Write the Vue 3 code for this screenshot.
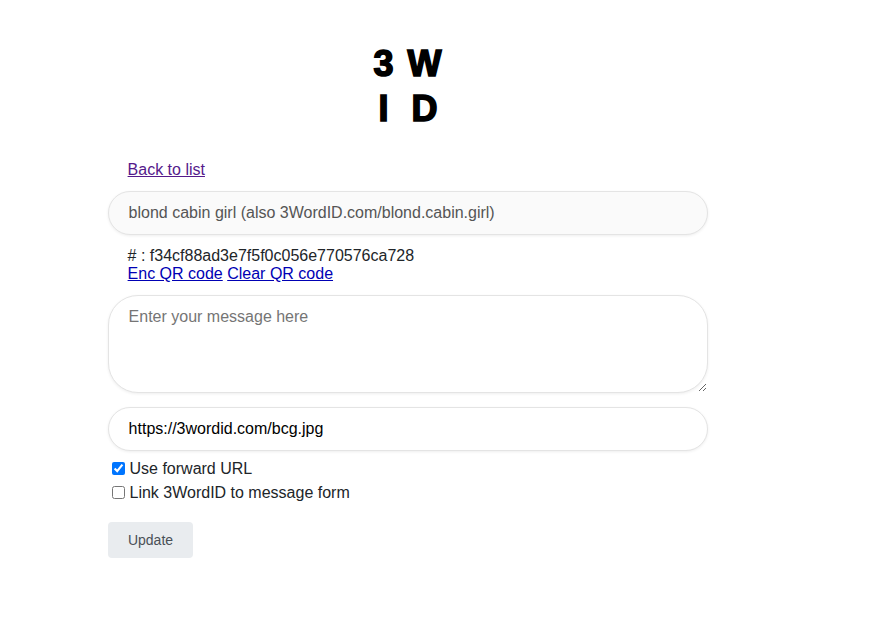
<template>
  <div class="page">
    <div class="logo">
      <div class="logo-row"><span>3</span><span>W</span></div>
      <div class="logo-row"><span>I</span><span>D</span></div>
    </div>

    <div class="block"><a href="#" class="visited">Back to list</a></div>

    <form class="edit-form" @submit.prevent>
      <input class="field readonly" type="text" readonly :value="title" />

      <div class="block info">
        <div># : {{ hash }}</div>
        <div><a href="#">Enc QR code</a> <a href="#">Clear QR code</a></div>
      </div>

      <textarea v-model="message" class="field message" placeholder="Enter your message here"></textarea>
      <input v-model="forwardUrl" class="field url" type="text" />

      <label class="check first"><input v-model="useForward" type="checkbox" />Use forward URL</label>
      <label class="check"><input v-model="linkForm" type="checkbox" />Link 3WordID to message form</label>

      <button type="submit" class="btn">Update</button>
    </form>
  </div>
</template>

<script setup>
import { ref } from 'vue'

const title = 'blond cabin girl (also 3WordID.com/blond.cabin.girl)'
const hash = 'f34cf88ad3e7f5f0c056e770576ca728'

// form state
const message = ref('')
const forwardUrl = ref('https://3wordid.com/bcg.jpg')
const useForward = ref(true)
const linkForm = ref(false)
</script>

<style scoped>
.page {
  width: 600px;
  margin-left: 108px;
  padding-top: 46px;
  font-family: "Liberation Sans", Arial, sans-serif;
  font-size: 16px;
  line-height: 18px;
  color: #212529;
}

/* Logo */
.logo {
  display: flex;
  flex-direction: column;
  align-items: center;
  gap: 9px;
  height: 87px;
  margin-bottom: 28px;
  padding-right: 8px;
  color: #000;
  font-family: "Liberation Sans", Arial, sans-serif;
  font-size: 36px;
  font-weight: 700;
  line-height: 36px;
  -webkit-text-stroke: 1.6px #000;
}
.logo-row {
  display: grid;
  grid-template-columns: 41px 41px;
  justify-items: center;
}

.block {
  padding-left: 19.6px;
}

a {
  color: #0000b4;
}
a.visited {
  color: #551a8b;
}

.edit-form {
  display: flex;
  flex-direction: column;
  align-items: flex-start;
  margin-top: 12px;
}

/* Fields */
.field {
  box-sizing: border-box;
  display: block;
  width: 600px;
  border: 1px solid #e4e4e4;
  border-radius: 22px;
  outline: none;
  padding: 0 19.6px;
  font-family: inherit;
  font-size: 16px;
  color: #000;
  background: #fff;
  box-shadow: 0 1px 3px rgba(0, 0, 0, 0.07);
}
.readonly {
  height: 44px;
  background: #fafafa;
  color: #555;
}
.info {
  margin-top: 12px;
  margin-bottom: 12px;
  color: #212529;
}
.message {
  height: 98px;
  padding-top: 12px;
  border-radius: 30px;
  line-height: 18px;
  resize: vertical;
}
.message::placeholder {
  color: #757575;
}
.url {
  height: 44px;
  margin-top: 14px;
}

/* Checkboxes */
.check {
  display: flex;
  align-items: center;
  height: 24px;
  padding-left: 4px;
}
.check.first {
  margin-top: 6px;
}
.check input {
  width: 13px;
  height: 13px;
  margin: -1px 4.5px 0 0;
}

/* Tombol */
.btn {
  margin-top: 17px;
  width: 85px;
  height: 36px;
  border: none;
  border-radius: 4px;
  background: #e9ecef;
  color: #495057;
  font-family: inherit;
  font-size: 14px;
  cursor: pointer;
}
</style>
